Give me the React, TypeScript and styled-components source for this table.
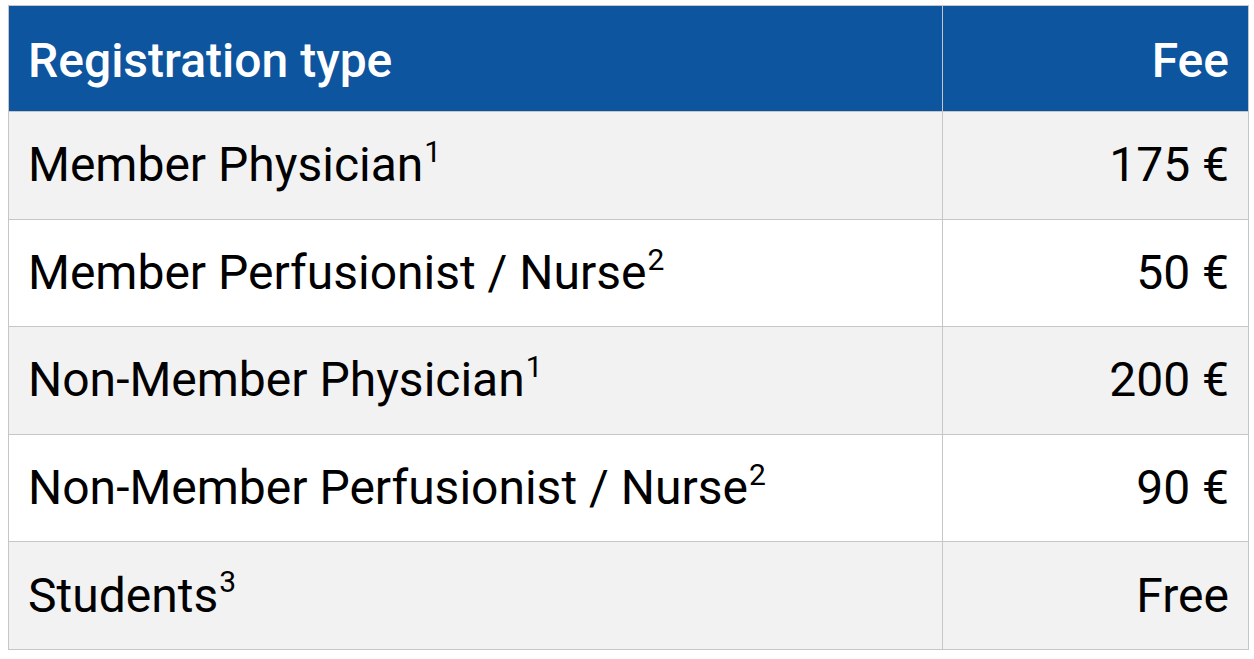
import React from "react";
import styled, { createGlobalStyle } from "styled-components";

const GlobalStyle = createGlobalStyle`
  html, body { margin: 0; padding: 0; background: #ffffff; }
  body { font-family: Roboto, "Noto Sans", "Liberation Sans", sans-serif; }
`;

const Wrapper = styled.div`
  padding: 5px 6px 0 8px;
`;

const Table = styled.table`
  width: 1241px;
  border-collapse: collapse;
  border: 1px solid #c6c6c6;
  font-family: Roboto, "Liberation Sans", sans-serif;
`;

const HeadCell = styled.th<{ $align?: "left" | "right" }>`
  background: #0e55a0;
  color: #ffffff;
  font-weight: 500;
  font-size: 48px;
  height: 106px;
  padding: 4px 19px 0 19px;
  box-sizing: border-box;
  text-align: ${(p) => p.$align ?? "left"};
  border: 1px solid #c6c6c6;
  border-top: none;
  line-height: 1;
`;

const Row = styled.tr<{ $shaded: boolean }>`
  background: ${(p) => (p.$shaded ? "#f2f2f2" : "#ffffff")};
`;

const Cell = styled.td<{ $align?: "left" | "right" }>`
  color: #000000;
  font-size: 48px;
  font-weight: 400;
  height: 106.6px;
  padding: 0 19px;
  text-align: ${(p) => p.$align ?? "left"};
  border: 1px solid #c6c6c6;
  line-height: 1;
  white-space: nowrap;
`;

const FirstCol = styled.col`
  width: 934px;
`;

const Sup = styled.sup`
  font-size: 30px;
  line-height: 0;
  vertical-align: 0.64em;
  margin-left: 1px;
`;

const rows = [
  { label: "Member Physician", note: "1", fee: "175 €" },
  { label: "Member Perfusionist / Nurse", note: "2", fee: "50 €" },
  { label: "Non-Member Physician", note: "1", fee: "200 €" },
  { label: "Non-Member Perfusionist / Nurse", note: "2", fee: "90 €" },
  { label: "Students", note: "3", fee: "Free" },
];

export default function App() {
  return (
    <>
      <GlobalStyle />
      <Wrapper>
        <Table>
          <colgroup>
            <FirstCol />
            <col />
          </colgroup>
          <thead>
            <tr>
              <HeadCell>Registration type</HeadCell>
              <HeadCell $align="right">Fee</HeadCell>
            </tr>
          </thead>
          <tbody>
            {rows.map((r, i) => (
              <Row key={r.label} $shaded={i % 2 === 0}>
                <Cell>
                  {r.label}
                  <Sup>{r.note}</Sup>
                </Cell>
                <Cell $align="right">{r.fee}</Cell>
              </Row>
            ))}
          </tbody>
        </Table>
      </Wrapper>
    </>
  );
}
